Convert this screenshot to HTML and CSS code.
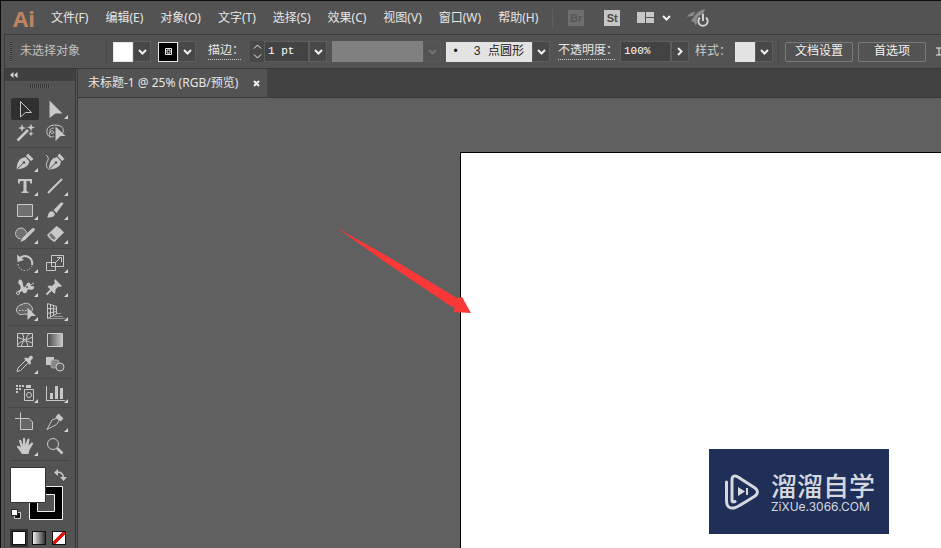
FILE: index.html
```html
<!DOCTYPE html>
<html lang="zh-CN">
<head>
<meta charset="utf-8">
<title>未标题-1</title>
<link rel="stylesheet" href="styles.css">
</head>
<body>
<div class="app">
  <header class="menubar">
    <span class="brand">Ai</span>
    <nav class="menus">
      <button>文件(F)</button>
      <button>编辑(E)</button>
      <button>对象(O)</button>
      <button>文字(T)</button>
      <button>选择(S)</button>
      <button>效果(C)</button>
      <button>视图(V)</button>
      <button>窗口(W)</button>
      <button>帮助(H)</button>
    </nav>
    <div class="services">
      <button class="badge badge-off">Br</button>
      <button class="badge">St</button>
      <button class="arrange" aria-label="排列文档">
        <svg width="35" height="12" viewBox="0 0 35 12"><path fill="#c6c6c6" d="M0 0h8v11H0zM9 0h8v5H9zM9 6h8v5H9z"/><path d="M26 4l3.500 3.500L33 4" fill="none" stroke="#f0f0f0" stroke-width="2"/></svg>
      </button>
      <button class="launch" aria-label="GPU 性能">
        <svg width="23" height="18" viewBox="0 0 23 18"><path fill="#8c8c8c" d="M0 8Q3 3 8 3L6 7Q3 7 0 8zM6 9Q10 2 18 0Q17 5 14 8L10 13L9 17L7 13L4 12z"/><circle cx="16" cy="12" r="6.500" fill="#535353"/><path d="M13 8.500a4.700 4.700 0 1 0 6 0M16 5v7" fill="none" stroke="#d0d0d0" stroke-width="2"/></svg>
      </button>
    </div>
  </header>

  <section class="controlbar">
    <span class="grip"></span>
    <span class="status">未选择对象</span>
    <span class="rule"></span>
    <div class="combo">
      <button class="swatch swatch-white" aria-label="填色"></button>
      <button class="drop" aria-label="填色选项"><svg class="chev" viewBox="0 0 9 6"><path d="M1 1l3.500 3.500L8 1"/></svg></button>
    </div>
    <div class="combo combo-stroke">
      <button class="swatch swatch-stroke" aria-label="描边颜色"><svg width="17" height="17" viewBox="0 0 17 17"><path d="M5.500 5.500h6v6h-6z" fill="none" stroke="#fff"/><path d="M7 7h3v3H7z" fill="#fff"/></svg></button>
      <button class="drop" aria-label="描边选项"><svg class="chev" viewBox="0 0 9 6"><path d="M1 1l3.500 3.500L8 1"/></svg></button>
    </div>
    <label class="dotted label-stroke" for="weight">描边：</label>
    <div class="combo combo-weight">
      <button class="step" aria-label="调整粗细"><svg width="9" height="15" viewBox="0 0 9 15"><path d="M1 4.500L4.500 1L8 4.500M1 10.500L4.500 14L8 10.500"/></svg></button>
      <input id="weight" class="field" value="1 pt">
      <button class="drop" aria-label="粗细选项"><svg class="chev" viewBox="0 0 9 6"><path d="M1 1l3.500 3.500L8 1"/></svg></button>
    </div>
    <div class="combo combo-profile">
      <button class="profile" aria-label="宽度配置" disabled></button>
      <button class="drop drop-off" aria-label="宽度配置选项" disabled><svg class="chev" viewBox="0 0 9 6"><path d="M1 1l3.500 3.500L8 1"/></svg></button>
    </div>
    <div class="combo combo-brush">
      <select class="brush" aria-label="画笔定义"><option>•&nbsp; 3 点圆形</option></select>
      <span class="drop"><svg class="chev" viewBox="0 0 9 6"><path d="M1 1l3.500 3.500L8 1"/></svg></span>
    </div>
    <label class="dotted label-opacity" for="opacity">不透明度：</label>
    <div class="combo combo-opacity">
      <input id="opacity" class="field" value="100%">
      <button class="drop" aria-label="不透明度选项"><svg width="6" height="9" viewBox="0 0 6 9"><path d="M1 1l3.500 3.500L1 8"/></svg></button>
    </div>
    <span class="label-style">样式：</span>
    <div class="combo">
      <button class="swatch swatch-light" aria-label="图形样式"></button>
      <button class="drop" aria-label="样式选项"><svg class="chev" viewBox="0 0 9 6"><path d="M1 1l3.500 3.500L8 1"/></svg></button>
    </div>
    <span class="rule rule-end"></span>
    <button class="action">文档设置</button>
    <button class="action">首选项</button>
    <button class="align" aria-label="对齐"><svg width="12" height="9" viewBox="0 0 12 9"><path d="M0 1h12M0 8h12M3 1v7"/></svg></button>
  </section>

  <div class="workspace">
    <aside class="tools">
      <button class="collapse" aria-label="折叠"><svg width="8" height="6" viewBox="0 0 8 6"><path d="M3.500 0v6L0 3zM7.500 0v6L4 3z" fill="#d8d8d8"/></svg></button>
      <div class="tools-grip"></div>

      <div class="group">
        <button class="tool active" aria-label="选择"><svg viewBox="1 1 28 22"><path class="l" d="M10.500 4.500L21.500 15.500H15.500L10.500 20z"/></svg></button>
        <button class="tool more" aria-label="直接选择"><svg viewBox="1 1 28 22"><path class="f" d="M9.500 3.500L22.500 16.500H15.500L9.500 21z"/></svg></button>
        <button class="tool" aria-label="魔棒"><svg viewBox="1 1 28 22"><path class="l" stroke-width="2.500" d="M7.500 19.500L18 9"/><path class="f" d="M12 3l1 3 3 1-3 1-1 3-1-3-3-1 3-1zM21 2.500l1 3 3 1-3 1-1 3-1-3-3-1 3-1zM21 10l.7 2 2 .7-2 .7-.7 2-.7-2-2-.7 2-.7z"/></svg></button>
        <button class="tool" aria-label="套索"><svg viewBox="1 1 28 22"><path class="l" d="M14 15C10 18 6 14 7 9C8 4 15 3 20 5C24 6 24 11 22 13M14 7C10 7 9 10 11 12C13 14 15 11 13 10C11 9 8 12 10 16"/><path class="f" d="M15.500 5.500L25.500 15H20.500L15.500 20z"/></svg></button>
      </div>
      <div class="group">
        <button class="tool more" aria-label="钢笔"><svg viewBox="1 1 28 22"><path class="f" d="M6.500 19.500Q7 11 11 8.500L15.500 7L19.500 11.500L18 15Q15 18.500 6.500 19.500zM16 6l2-2.500 5.500 5.500-2.500 2z"/><path d="M7 19l6.500-6" stroke="#535353" fill="none"/><circle cx="14" cy="12.500" r="1.300" fill="#535353"/></svg></button>
        <button class="tool" aria-label="曲率"><svg viewBox="1 1 28 22"><path class="f" d="M9 19.500Q9 12 13 8.500L17 7L21 11.500L20 15Q17 19 9 19.500zM17.500 6l2-2.500 5 5.500-2.500 2z"/><path class="l" d="M6 5Q10 8 7 12Q5 17 9 19.500"/><path d="M9.500 19l6-6" stroke="#535353" fill="none"/><circle cx="16" cy="12.500" r="1.300" fill="#535353"/></svg></button>
        <button class="tool more" aria-label="文字"><svg viewBox="1 1 28 22"><path class="f" d="M8 5H22V9.500H20.500L19.500 7H16.500V17L18.500 18V19H11.500V18L13.500 17V7H10.500L9.500 9.500H8z"/></svg></button>
        <button class="tool more" aria-label="直线段"><svg viewBox="1 1 28 22"><path class="l" stroke-width="2" d="M8 19L22 5"/></svg></button>
        <button class="tool more" aria-label="矩形"><svg viewBox="1 1 28 22"><path class="l" style="fill:#707070" d="M7.500 6.500h15v12h-15z"/></svg></button>
        <button class="tool more" aria-label="画笔"><svg viewBox="1 1 28 22"><path class="f" d="M7 19.500Q8 18 8.500 15.500Q10 12.500 13 13.500L15 16Q14 20 7 19.500zM13.500 12L21 4.500Q23 4 23.500 5.500L16.500 15z"/></svg></button>
        <button class="tool more" aria-label="Shaper"><svg viewBox="1 1 28 22"><circle class="l" style="fill:#707070" cx="11" cy="11.500" r="5.500"/><path d="M12 19l11.500-11" stroke="#535353" stroke-width="5"/><path class="f" d="M10.500 20l1.500-4L22 6.500Q24.500 5 25 8L15 18z"/></svg></button>
        <button class="tool more" aria-label="橡皮擦"><svg viewBox="1 1 28 22"><path class="f" d="M7 13L16.500 4Q20 6 24 10.500L14.500 20Q10 18 7 13z"/><path d="M9 13l2-2 5 5-2 2q-3-1-5-5z" fill="#777"/></svg></button>
      </div>
      <div class="group">
        <button class="tool more" aria-label="旋转"><svg viewBox="1 1 28 22"><path class="l" stroke-width="2" d="M10 7Q15 3 20 7Q23 10 22 14"/><path class="f" d="M7 3.500L7.500 11L14 9z"/><path class="l" stroke-dasharray="1.500 1.500" d="M8 13Q9 19.500 15.500 19.500Q20 19 22 15"/></svg></button>
        <button class="tool more" aria-label="缩放"><svg viewBox="1 1 28 22"><path class="l" d="M11.500 4.500h12v11h-12zM6.500 11.500h9v8h-9zM15 12l5-5M17 6.500h4.500V11"/></svg></button>
        <button class="tool more" aria-label="宽度"><svg viewBox="1 1 28 22"><path class="f" d="M9 5Q12 3 13 9Q13 14 16 11Q17 6 20 8Q20 12 24 11Q25 14 21 15Q17 13 17 17Q14 20 12 16Q10 18 8 16Q12 14 10 10Q7 9 9 5z"/><path class="l" d="M7 18L24 8"/><circle class="l" style="fill:#535353" cx="8" cy="18" r="1.500"/><circle class="l" style="fill:#535353" cx="17" cy="12" r="1.500"/></svg></button>
        <button class="tool more" aria-label="操控变形"><svg viewBox="1 1 28 22"><path class="f" d="M15 4l7 7-2 1-1.500-.5-3 3Q16 17 14.500 19L7.500 11.500Q9.500 10 12 11l3-3-.8-2z"/><path class="l" stroke-width="2" d="M6.500 19.500L11.500 14.500"/></svg></button>
        <button class="tool more" aria-label="形状生成器"><svg viewBox="1 1 28 22"><path class="l" style="fill:#666" d="M12 5.500C17 2 22 6 22.500 10C22 14 18 16 14 15C10 17 6.500 14 6.500 11C6.500 8 9 6 12 5.500z"/><path class="l" stroke-dasharray="1.500 1.500" d="M9 11.500H20"/><path class="f" d="M17.500 8.500L26 17H21.500L17.500 21z"/></svg></button>
        <button class="tool more" aria-label="透视网格"><svg viewBox="1 1 28 22"><path class="l" d="M7.500 4.500V19.500L16.500 15V7.500zM10.500 5.500V18M13.500 6.500V16.500M7.500 9.500L16.500 10M7.500 14.500L16.500 12.500"/><path d="M14 17.500H23M17 14.500H21M8 19.500H25" stroke="#999"/></svg></button>
      </div>
      <div class="group">
        <button class="tool" aria-label="网格"><svg viewBox="1 1 28 22"><path class="l" d="M7.500 5.500h15v13h-15zM12 5.500Q16 10 11 18.500M20 5.500Q14 8 18 18.500M7.500 9Q15 14 22.500 9M7.500 17Q12 10 22.500 15"/></svg></button>
        <button class="tool" aria-label="渐变"><svg viewBox="1 1 28 22"><defs><linearGradient id="ramp"><stop stop-color="#4a4a4a"/><stop offset="1" stop-color="#c8c8c8"/></linearGradient></defs><path class="l" style="fill:url(#ramp)" d="M7.500 5.500h15v13h-15z"/></svg></button>
        <button class="tool more" aria-label="吸管"><svg viewBox="1 1 28 22"><path class="l" d="M7 19.500L8 16L16 8L18.500 10.500L10.500 18.500z"/><path class="f" d="M14 6.500l2-1 2 .8L20 4Q22.500 3 23 6L20.500 9 21 11l-1 2z"/></svg></button>
        <button class="tool" aria-label="混合"><svg viewBox="1 1 28 22"><path class="f" d="M6 5h8v8H6z"/><rect x="11" y="8" width="8" height="8" rx="2" fill="#888" stroke="#aaa"/><circle class="l" style="fill:#606060" cx="20" cy="15" r="4"/></svg></button>
      </div>
      <div class="group">
        <button class="tool more" aria-label="符号喷枪"><svg viewBox="1 1 28 22"><path class="f" d="M6 4h2v2H6zM9 4h2v2H9zM12 4h2v2h-2zM6 7h2v2H6zM9 7h2v2H9zM6 10h2v2H6zM16 4h5v3h-5z"/><path class="l" d="M14.500 8.500h9v11h-9z"/><circle class="l" cx="19" cy="14" r="2.500"/></svg></button>
        <button class="tool more" aria-label="柱形图"><svg viewBox="1 1 28 22"><path class="f" d="M6 5h1v14h18v1H6zM10 12h3v6h-3zM15 5h3v13h-3zM20 7h3v11h-3z"/></svg></button>
      </div>
      <div class="group">
        <button class="tool" aria-label="画板"><svg viewBox="1 1 28 22"><path class="l" style="fill:#666" d="M10.500 8.500H19L22.500 12V19.500H10.500z"/><path class="l" stroke-width="1" d="M10.500 2.500V8M5 8.500H10M13 8.500"/></svg></button>
        <button class="tool more" aria-label="切片"><svg viewBox="1 1 28 22"><path class="l" d="M7 19.500L12 10L17 8L19 10.500L16.500 14.500z"/><path class="f" d="M15.500 7l3-3.500 5 5-3 3z"/></svg></button>
        <button class="tool more" aria-label="抓手"><svg viewBox="1 1 28 22"><path class="f" d="M12 20L7 13Q7 11 9 12L11 13.500L9 7Q9.500 5 11 6L13 11L13 4.500Q14 3 15 4.500L15.500 10.500L17.500 5Q19 4 19.500 5.500L18.500 11.500L21.500 8.500Q23.500 8 23 10L19.500 16L18.500 20z"/></svg></button>
        <button class="tool" aria-label="缩放工具"><svg viewBox="1 1 28 22"><circle class="l" cx="13" cy="10" r="5.500"/><path class="l" stroke-width="2.500" d="M17 14L22.500 19.500"/></svg></button>
      </div>

      <div class="paint">
        <svg viewBox="0 0 60 62" width="60" height="62" role="img" aria-label="填色和描边">
          <path d="M19.500 24.500h33v33h-33z" fill="#000" stroke="#eee"/><path d="M27.500 32.500h17v17h-17z" fill="#535353" stroke="#eee"/>
          <path d="M.5 5.500h35v35H.5z" fill="#fff" stroke="#333"/>
          <path d="M47 10.500Q53 9.500 53.500 16" fill="none" stroke="#c6c6c6" stroke-width="1.500"/><path d="M48 7v7l-4-3.500zM50 15h7l-3.500 4z" fill="#c6c6c6"/>
          <path d="M4.500 50.500h6v6h-6z" fill="#111" stroke="#ccc"/><path d="M1.500 47.500h6v6h-6z" fill="#fff" stroke="#222"/>
        </svg>
      </div>
      <div class="modes">
        <button class="mode mode-on" aria-label="颜色"><span class="chip chip-color"></span></button>
        <button class="mode" aria-label="渐变"><span class="chip chip-ramp"></span></button>
        <button class="mode" aria-label="无"><span class="chip chip-none"></span></button>
      </div>
    </aside>

    <main class="document">
      <div class="tabs">
        <div class="tab"><span>未标题-1 @ 25% (RGB/预览)</span><button class="close" aria-label="关闭"><svg width="7" height="7" viewBox="0 0 7 7"><path d="M1 1l5 5M6 1L1 6"/></svg></button></div>
      </div>
      <div class="canvas">
        <div class="artboard"></div>
        <svg class="pointer" width="136" height="88" viewBox="0 0 136 88"><path d="M0 0L50 28L120 70L125 69L134 85L116 84L118 80L112 77L48 34z" fill="#fb3838"/></svg>
        <div class="watermark">
          <svg width="36" height="38" viewBox="0 0 36 38"><g fill="none" stroke="#d5d8df" stroke-width="3" stroke-linecap="round" stroke-linejoin="round"><path d="M2.500 9V28Q2.500 36 10 35Q13 34.500 31 23Q36 19 31 15L14 4Q8 1 8 7V28Q8 29.500 11 28.500"/></g><path d="M14 14L21 18.500L14 23zM22 15h2v7h-2z" fill="#d5d8df"/></svg>
          <div class="watermark-text"><strong>溜溜自学</strong><span>ZiXUe.3066.COM</span></div>
        </div>
      </div>
    </main>
  </div>
</div>
</body>
</html>
```
FILE: styles.css
```css
* { box-sizing: border-box; }
body {
  margin: 0;
  overflow: hidden;
  background: #535353;
  color: #e6e6e6;
  font: 12px/16px "Noto Sans", "Noto Sans CJK SC", sans-serif;
}
button, input, select {
  margin: 0;
  padding: 0;
  border: 0;
  border-radius: 0;
  background: none;
  color: inherit;
  font: inherit;
}
svg { display: block; flex: none; }
.app {
  display: flex;
  flex-direction: column;
  height: 100vh;
  border-top: 1px solid #0c0c0c;
  border-left: 1px solid #0c0c0c;
  padding-left: 3px;
}

.menubar {
  display: flex;
  align-items: center;
  flex: none;
  height: 34px;
  padding-left: 9px;
  border-bottom: 1px solid #3a3a3a;
  white-space: nowrap;
}
.brand {
  width: 38px;
  color: #c08560;
  font: bold 22px/28px "Open Sans", sans-serif;
}
.menus { display: flex; gap: 17px; }
.services {
  display: flex;
  align-items: center;
  margin-left: 14px;
  padding-left: 15px;
  border-left: 1px solid #606060;
}
.badge {
  width: 16px;
  height: 16px;
  margin-right: 20px;
  background: #c6c6c6;
  color: #4a4a4a;
  font: bold 11px/16px "Liberation Sans", sans-serif;
}
.badge-off { background: #6e6e6e; color: #555; }
.arrange { margin: 0 15px 0 -3px; }

.controlbar {
  display: flex;
  align-items: center;
  flex: none;
  height: 34px;
  padding-left: 5px;
  border-left: 1px solid #3a3a3a;
  border-bottom: 1px solid #3a3a3a;
  font-family: "Liberation Mono", "Noto Sans CJK SC", monospace;
  white-space: nowrap;
}
.controlbar > * { flex: none; }
.controlbar svg path { fill: none; stroke: #f0f0f0; stroke-width: 2; }
.controlbar .swatch svg path { stroke-width: 1; }
.grip {
  width: 2px;
  height: 20px;
  background: repeating-linear-gradient(#333 0 1px, #606060 1px 2px);
}
.status { width: 86px; margin-left: 8px; color: #c0c0c0; }
.rule { width: 1px; height: 22px; margin-right: 6px; background: #474747; }
.combo { display: flex; align-items: center; height: 21px; }
.combo-stroke { margin-left: 7px; }
.swatch { width: 20px; height: 20px; border: 1px solid #e6e6e6; }
.swatch-white { background: #fff; }
.swatch-light { background: #e3e3e3; }
.swatch-stroke { display: grid; place-items: center; background: #000; }
.drop {
  display: grid;
  place-items: center;
  width: 18px;
  height: 21px;
  border: 1px solid #5d5d5d;
  background: #484848;
}
.chev { width: 9px; height: 6px; }
.dotted { border-bottom: 1px dotted #ccc; line-height: 15px; }
.label-stroke { width: 33px; margin-left: 12px; overflow: hidden; }
.combo-weight { margin-left: 9px; }
.step { display: grid; place-items: center; width: 14px; height: 21px; background: #484848; }
.step svg path { stroke-width: 1; }
.field {
  width: 45px;
  height: 21px;
  padding: 0 3px 2px;
  border: 1px solid #5d5d5d;
  background: #434343;
  color: #fff;
  font-size: 11px;
}
.combo-profile { margin-left: 5px; }
.profile { width: 91px; height: 21px; background: #808080; }
.drop-off { border-color: #585858; background: #535353; }
.drop-off .chev { opacity: .2; }
.combo-brush { position: relative; margin-left: 5px; }
.brush {
  appearance: none;
  width: 104px;
  height: 20px;
  padding-left: 6px;
  background: #e3e3e3;
  color: #222;
}
.combo-brush .drop { position: absolute; right: 0; pointer-events: none; }
.label-opacity { width: 57px; margin-left: 8px; overflow: hidden; }
.combo-opacity { margin-left: 5px; }
.combo-opacity .field { width: 51px; }
.label-style { width: 35px; margin: 0 5px 0 6px; overflow: hidden; color: #ccc; }
.rule-end { margin-left: 5px; }
.action {
  width: 68px;
  height: 20px;
  margin-right: 5px;
  border: 1px solid #7a7a7a;
  border-radius: 2px;
  color: #f0f0f0;
}
.align { margin-left: 5px; }
.controlbar .align path { stroke-width: 1; }

.workspace { display: flex; flex: 1; min-height: 0; }
.tools {
  flex: none;
  width: 72px;
  border: solid #3a3a3a;
  border-width: 0 1px;
}
.collapse { display: flex; align-items: center; width: 100%; height: 12px; padding-left: 5px; background: #404040; }
.tools-grip {
  width: 20px;
  height: 4px;
  margin: 3px 0 9px 25px;
  background: repeating-linear-gradient(90deg, #333 0 1px, #606060 1px 2px);
}
.group { display: grid; grid-template-columns: 30px 30px; margin: 0 5px; position: relative; }
.group + .group { margin-top: 5px; }
.group + .group::before {
  content: "";
  position: absolute;
  top: -3px;
  left: -2px;
  right: -2px;
  height: 1px;
  background: #474747;
}
.tool {
  position: relative;
  width: 30px;
  height: 24px;
  border: 1px solid transparent;
  border-radius: 3px;
  background-clip: padding-box;
}
.tool svg { width: 28px; height: 22px; }
.active { background-color: #303030; }
.more::after {
  content: "";
  position: absolute;
  right: 1px;
  bottom: 1px;
  border: 2px solid transparent;
  border-right-color: #d5d5d5;
  border-bottom-color: #d5d5d5;
}
.f { fill: #c8c8c8; }
.l { fill: none; stroke: #c8c8c8; }
.paint { margin: 2px 5px 0; padding-top: 1px; border-top: 1px solid #474747; }
.modes { display: flex; gap: 2px; margin-left: 5px; padding-top: 5px; }
.mode { display: grid; place-items: center; width: 18px; height: 18px; }
.mode-on { background: #303030; }
.chip { width: 14px; height: 14px; border: 1px solid #111; }
.chip-color { background: #fff; }
.chip-ramp { background: linear-gradient(90deg, #eee, #333); }
.chip-none { background: linear-gradient(135deg, #fff 0 40%, #e11313 40% 60%, #fff 60%); }

.document { display: flex; flex: 1; flex-direction: column; min-width: 0; margin-left: 1px; border-left: 1px solid #3a3a3a; }
.tabs { display: flex; flex: none; height: 29px; border-bottom: 1px solid #383838; background: #424242; }
.tab { display: flex; align-items: center; gap: 15px; padding: 0 7px 0 10px; background: #535353; }
.close { padding: 0; }
.close path { fill: none; stroke: #f0f0f0; stroke-width: 2; }
.canvas { position: relative; flex: 1; overflow: hidden; background: #606060; }
.artboard {
  position: absolute;
  inset: 54px 0 0 382px;
  border: solid #000;
  border-width: 1px 0 0 1px;
  background: #fff;
}
.pointer { position: absolute; left: 259px; top: 130px; }
.watermark {
  position: absolute;
  right: 52px;
  bottom: 14px;
  display: flex;
  align-items: center;
  gap: 11px;
  width: 180px;
  height: 85px;
  padding-left: 15px;
  background: #202f57;
  color: #d5d8df;
}
.watermark-text { display: flex; flex-direction: column; }
.watermark strong { font: 500 26px/30px "Noto Sans CJK SC", sans-serif; }
.watermark-text span { font: 12px/14px Inter, sans-serif; }
```
